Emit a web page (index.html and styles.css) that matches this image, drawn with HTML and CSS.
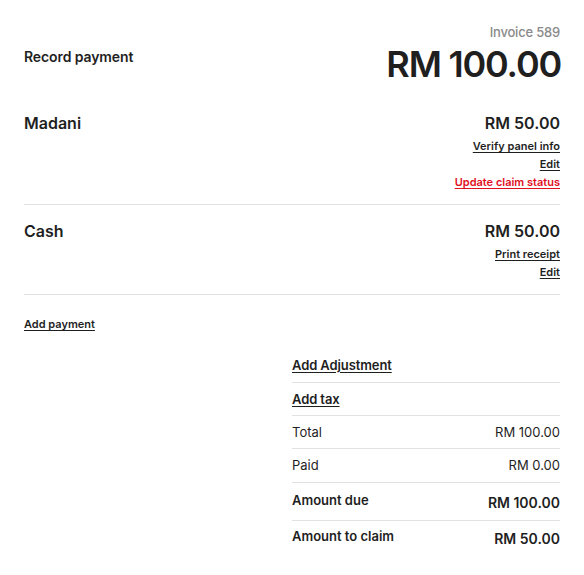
FILE: index.html
```html
<!DOCTYPE html>
<html>
<head>
<meta charset="utf-8">
<link rel="stylesheet" href="styles.css">
</head>
<body>
<div class="page">
  <header class="head">
    <h1 class="title">Record payment</h1>
    <div class="head-right">
      <div class="invoice">Invoice 589</div>
      <div class="total">RM 100.00</div>
    </div>
  </header>

  <section class="payments">
    <div class="payment">
      <div class="pay-name">Madani</div>
      <div class="pay-right">
        <div class="pay-amount">RM 50.00</div>
        <a class="link">Verify panel info</a>
        <a class="link">Edit</a>
        <a class="link red">Update claim status</a>
      </div>
    </div>
    <div class="payment">
      <div class="pay-name">Cash</div>
      <div class="pay-right">
        <div class="pay-amount">RM 50.00</div>
        <a class="link">Print receipt</a>
        <a class="link">Edit</a>
      </div>
    </div>
  </section>

  <a class="link add-payment">Add payment</a>

  <div class="summary">
    <div class="row first"><a class="act">Add Adjustment</a></div>
    <div class="row"><a class="act">Add tax</a></div>
    <div class="row"><span>Total</span><span>RM 100.00</span></div>
    <div class="row paid"><span>Paid</span><span>RM 0.00</span></div>
    <div class="row strong"><span class="lbl">Amount due</span><span class="val">RM 100.00</span></div>
    <div class="row strong last"><span class="lbl">Amount to claim</span><span class="val">RM 50.00</span></div>
  </div>
</div>
</body>
</html>
```
FILE: styles.css
```css
html, body {
  margin: 0;
  padding: 0;
  background: #ffffff;
}
body {
  font-family: Inter, "Noto Sans", sans-serif;
  color: #1f1f1f;
}
.page {
  padding: 24px 24px 0 24px;
}
.head {
  display: flex;
  justify-content: space-between;
  align-items: flex-start;
}
.title {
  margin: 24px 0 0 0;
  font-size: 14px;
  line-height: 18px;
  font-weight: 600;
  letter-spacing: -0.1px;
}
.head-right {
  display: flex;
  flex-direction: column;
  align-items: flex-end;
}
.invoice {
  font-size: 13px;
  line-height: 16px;
  color: #8a8a8a;
  font-weight: 500;
  letter-spacing: -0.2px;
}
.total {
  font-size: 36px;
  line-height: 44px;
  font-weight: 600;
  letter-spacing: -1.2px;
  margin-top: 2px;
  margin-right: -1px;
}
.payments {
  margin-top: 27px;
}
.payment {
  display: flex;
  justify-content: space-between;
  align-items: flex-start;
  padding: 0 0 13px 0;
  border-bottom: 1px solid #e2e2e2;
}
.payment + .payment {
  padding-top: 16px;
}
.pay-name {
  font-size: 16px;
  line-height: 20px;
  font-weight: 600;
}
.pay-right {
  display: flex;
  flex-direction: column;
  align-items: flex-end;
}
.pay-amount {
  font-size: 16px;
  line-height: 20px;
  font-weight: 600;
  margin-bottom: 4px;
}
.link {
  font-size: 11px;
  line-height: 18px;
  font-weight: 600;
  color: #1f1f1f;
  text-decoration: underline;
  text-underline-offset: 2px;
}
.link.red {
  color: #e0101f;
}
.add-payment {
  display: inline-block;
  margin-top: 20px;
}
.summary {
  margin: 15px 0 0 auto;
  width: 268px;
}
.row {
  display: flex;
  justify-content: space-between;
  align-items: flex-start;
  font-size: 13px;
  line-height: 16px;
  padding: 8px 0;
  border-bottom: 1px solid #e2e2e2;
}
.row.first {
  padding: 9px 0;
}
.row.paid {
  padding-bottom: 9px;
}
.act {
  font-weight: 600;
  letter-spacing: -0.1px;
  text-decoration: underline;
  text-underline-offset: 2px;
}
.row.strong {
  padding: 9px 0 6px 0;
}
.row.strong .lbl {
  font-weight: 600;
}
.row.strong .val {
  font-size: 14px;
  line-height: 22px;
  font-weight: 600;
}
.row.last {
  padding-top: 7px;
  border-bottom: none;
}
```
